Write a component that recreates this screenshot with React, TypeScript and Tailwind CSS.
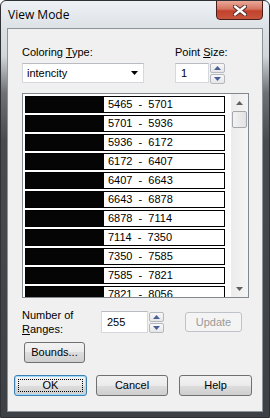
import React from "react";

const ranges = [5465, 5701, 5936, 6172, 6407, 6643, 6878, 7114, 7350, 7585, 7821, 8056];

function Tri({ up, color = "#4a5f97" }: { up?: boolean; color?: string }) {
  return (
    <svg width="7" height="4" viewBox="0 0 7 4">
      <path d={up ? "M0 4 L3.5 0 L7 4 Z" : "M0 0 L7 0 L3.5 4 Z"} fill={color} />
    </svg>
  );
}

function Spin() {
  return (
    <div className="flex flex-col gap-[1px]">
      <div className="w-[15px] h-[10px] flex items-center justify-center rounded-[2px] border border-[#b5b9bf] bg-[linear-gradient(#f8f8f8,#e6e6e6)]">
        <Tri up />
      </div>
      <div className="w-[15px] h-[10px] flex items-center justify-center rounded-[2px] border border-[#b5b9bf] bg-[linear-gradient(#f8f8f8,#e6e6e6)]">
        <Tri />
      </div>
    </div>
  );
}

function Btn({
  children,
  className,
  disabled,
  focused,
}: {
  children: React.ReactNode;
  className?: string;
  disabled?: boolean;
  focused?: boolean;
}) {
  const base = disabled
    ? "border-[#bfc3c7] bg-[#f4f4f4] text-[#9a9a9a]"
    : focused
    ? "border-[#3c7fb1] bg-[linear-gradient(#f2f2f2,#ebebeb_50%,#dddddd_50%,#cfcfcf)] text-black shadow-[inset_0_0_0_1px_#9fdcff]"
    : "border-[#707070] bg-[linear-gradient(#f2f2f2,#ebebeb_50%,#dddddd_50%,#cfcfcf)] text-black";
  return (
    <div
      className={`relative flex items-center justify-center rounded-[3px] border ${base} ${className ?? ""}`}
    >
      {focused && (
        <div className="absolute inset-[3px] border border-dotted border-black" />
      )}
      {children}
    </div>
  );
}

export default function App() {
  return (
    <div className="relative w-[270px] h-[418px] overflow-hidden rounded-t-[6px] border border-[#2f3134] bg-[linear-gradient(#eef2f5_0px,#dde2e7_26px,#d1d6db_55px,#6d7176_92px,#474a4e_140px,#3d4044_100%)] font-['Liberation_Sans',Arial,sans-serif] text-[11px] text-black flex flex-col px-[6px] pb-[5px]">
      {/* title bar */}
      <div className="h-[27px] flex items-center pl-[1px] text-[12px] font-['Open_Sans','Liberation_Sans',sans-serif]">
        View Mode
      </div>
      <div className="absolute top-[-1px] right-[6px] w-[47px] h-[20px] rounded-b-[4px] border border-[#4a1d16] bg-[linear-gradient(#eaa99a,#d4735f_45%,#c2412c_55%,#c9553c)] flex items-center justify-center">
        <svg width="14" height="11" viewBox="0 0 14 11">
          <path d="M2 1.5 L12 9.5 M12 1.5 L2 9.5" stroke="#4b2a25" strokeWidth="4.2" strokeLinecap="round" />
          <path d="M2 1.5 L12 9.5 M12 1.5 L2 9.5" stroke="#ffffff" strokeWidth="2.4" strokeLinecap="round" />
        </svg>
      </div>

      {/* client */}
      <div className="flex-1 border border-[#8d939a] bg-[#f0f0f0] pt-[16px]">
        <div className="flex ml-[14px]">
          <div className="w-[122px]">
            <div className="h-[14px] leading-[14px]">
              Coloring <span className="underline">T</span>ype:
            </div>
            <div className="mt-[4px] h-[20px] bg-white border border-[#d5d8dd] border-t-[#b8bbc1] flex items-center pl-[4px] pr-[5px]">
              <span className="flex-1">intencity</span>
              <svg width="7" height="4" viewBox="0 0 7 4">
                <path d="M0 0 L7 0 L3.5 4 Z" fill="#000" />
              </svg>
            </div>
          </div>
          <div className="ml-[31px]">
            <div className="h-[14px] leading-[14px]">
              Point <span className="underline">S</span>ize:
            </div>
            <div className="mt-[4px] flex">
              <div className="w-[34px] h-[20px] bg-white border border-[#d5d8dd] border-t-[#b8bbc1] flex items-center pl-[5px]">
                1
              </div>
              <div className="ml-[1px]">
                <Spin />
              </div>
            </div>
          </div>
        </div>

        {/* list */}
        <div className="mt-[9px] ml-[14px] w-[227px] h-[205px] border border-[#828790] bg-white flex overflow-hidden">
          <div className="pl-[2px] pt-[2px] flex flex-col gap-[2px]">
            {ranges.slice(0, 11).map((v, i) => (
              <div key={v} className="w-[200px] h-[17px] shrink-0 border border-black flex">
                <div className="w-[78px] bg-[#050505]" />
                <div className="flex-1 pl-[4px] leading-[15px] whitespace-pre">
                  {`${v}  -  ${ranges[i + 1]}`}
                </div>
              </div>
            ))}
          </div>
          <div className="ml-auto w-[17px] h-full bg-[linear-gradient(90deg,#ececec,#f4f4f4)] flex flex-col items-center">
            <div className="h-[17px] flex items-center justify-center">
              <Tri up color="#606060" />
            </div>
            <div className="w-[15px] h-[17px] rounded-[2px] border border-[#a4a8ad] bg-[linear-gradient(90deg,#f3f3f3,#e2e2e2)]" />
            <div className="flex-1" />
            <div className="h-[17px] flex items-center justify-center">
              <Tri color="#606060" />
            </div>
          </div>
        </div>

        {/* ranges */}
        <div className="mt-[13px] ml-[14px] flex items-center h-[22px]">
          <div className="w-[79px] leading-[14px]">
            Number of
            <br />
            <span className="underline">R</span>anges:
          </div>
          <div className="w-[47px] h-[22px] bg-white border border-[#d5d8dd] border-t-[#b8bbc1] flex items-center pl-[5px]">
            255
          </div>
          <div className="ml-[1px]">
            <Spin />
          </div>
          <Btn disabled className="ml-[21px] w-[57px] h-[20px]">
            Update
          </Btn>
        </div>

        <Btn className="mt-[9px] ml-[16px] w-[61px] h-[21px]">Bounds...</Btn>

        <div className="mt-[12px] ml-[6px] flex">
          <Btn focused className="w-[73px] h-[21px]">
            OK
          </Btn>
          <Btn className="ml-[9px] w-[72px] h-[21px]">Cancel</Btn>
          <Btn className="ml-[11px] w-[73px] h-[21px]">Help</Btn>
        </div>
      </div>
    </div>
  );
}
